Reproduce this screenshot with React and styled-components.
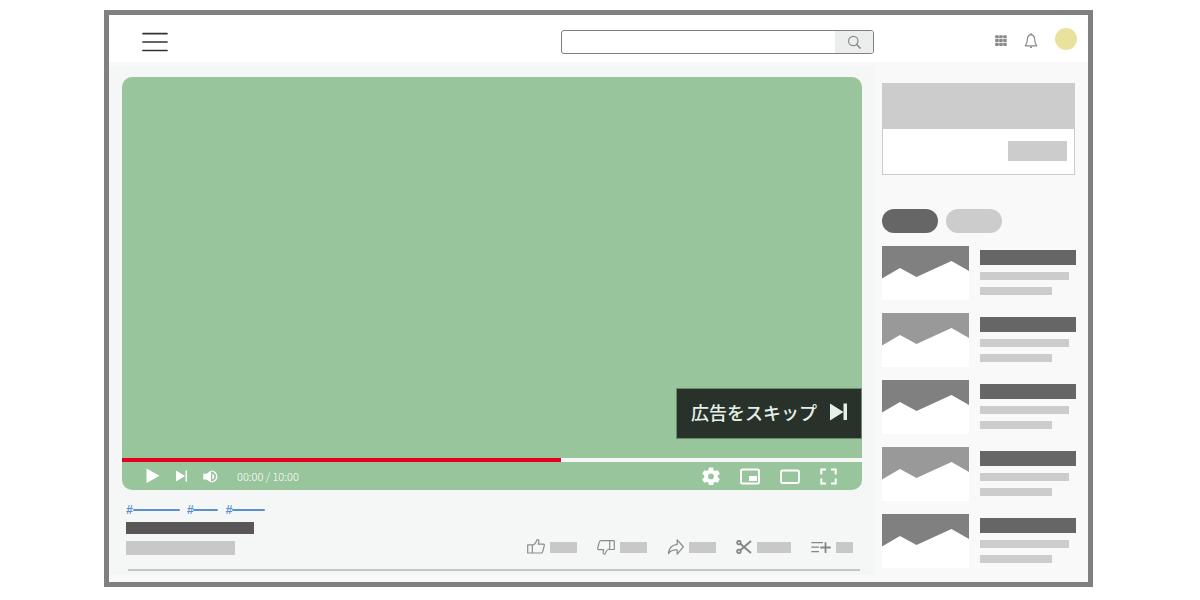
import React, { useState } from 'react';
import styled, { createGlobalStyle } from 'styled-components';

const videos = [
    { id: 1, shade: '#808080' },
    { id: 2, shade: '#999999' },
    { id: 3, shade: '#808080' },
    { id: 4, shade: '#999999' },
    { id: 5, shade: '#808080' },
]

const tags = [
    { id: 1, width: 47 },
    { id: 2, width: 25 },
    { id: 3, width: 33 },
]

const App = () => {
    const [position, setPosition] = useState(593)

    return (
        <Page>
            <GlobalStyle />
            <Frame>
                {/* header */}
                <Header>
                    <HeaderMain>
                        <IconButton aria-label="Menu"><MenuIcon /></IconButton>
                        <SearchForm role="search" onSubmit={e => e.preventDefault()}>
                            <SearchInput type="text" aria-label="Search" />
                            <SearchButton type="submit" aria-label="Search"><SearchIcon /></SearchButton>
                        </SearchForm>
                    </HeaderMain>
                    <HeaderSide>
                        <IconButton aria-label="Apps"><AppsIcon /></IconButton>
                        <IconButton aria-label="Notifications"><BellIcon /></IconButton>
                        <Avatar aria-label="Account" />
                    </HeaderSide>
                </Header>
                {/* end header */}
                <Content>
                    <Main>
                        {/* player */}
                        <Player>
                            <Video>
                                <SkipButton>
                                    広告をスキップ
                                    <SkipIcon />
                                </SkipButton>
                            </Video>
                            <Progress
                                type="range"
                                aria-label="Position"
                                min="0"
                                max="1000"
                                value={position}
                                onChange={e => setPosition(Number(e.target.value))}
                                style={{ '--played': `${position / 10}%` }}
                            />
                            <Controls>
                                <ControlGroup $gap={16}>
                                    <IconButton aria-label="Play"><PlayIcon /></IconButton>
                                    <IconButton aria-label="Next"><NextIcon /></IconButton>
                                    <IconButton aria-label="Volume"><VolumeIcon /></IconButton>
                                    <Time>00:00 / 10:00</Time>
                                </ControlGroup>
                                <ControlGroup $gap={20}>
                                    <IconButton aria-label="Settings"><GearIcon /></IconButton>
                                    <IconButton aria-label="Mini player"><MiniIcon /></IconButton>
                                    <IconButton aria-label="Theater mode"><TheaterIcon /></IconButton>
                                    <IconButton aria-label="Full screen"><FullIcon /></IconButton>
                                </ControlGroup>
                            </Controls>
                        </Player>
                        {/* end player */}
                        {/* video info */}
                        <Tags>
                            {tags.map(tag => (
                                <Tag key={tag.id} href="#">#<TagLine $width={tag.width} /></Tag>
                            ))}
                        </Tags>
                        <Info>
                            <Titles>
                                <Bar $width={128} $height={12} $color="#595757" />
                                <Bar $width={109} $height={14} $color="#c8c8c8" />
                            </Titles>
                            <Actions>
                                <Action aria-label="Like"><LikeIcon /><Bar $width={27} $height={11} $color="#c8c8c8" /></Action>
                                <Action aria-label="Dislike"><DislikeIcon /><Bar $width={27} $height={11} $color="#c8c8c8" /></Action>
                                <Action aria-label="Share"><ShareIcon /><Bar $width={27} $height={11} $color="#c8c8c8" /></Action>
                                <Action aria-label="Clip"><ClipIcon /><Bar $width={34} $height={11} $color="#c8c8c8" /></Action>
                                <Action aria-label="Save"><SaveIcon /><Bar $width={17} $height={11} $color="#c8c8c8" /></Action>
                            </Actions>
                        </Info>
                        <Divider />
                        {/* end video info */}
                    </Main>
                    {/* sidebar */}
                    <Sidebar>
                        <Ad>
                            <AdBanner />
                            <AdFooter><AdButton aria-label="Open ad" /></AdFooter>
                        </Ad>
                        <Filters>
                            <Pill aria-label="All" $color="#666666" />
                            <Pill aria-label="Related" $color="#cccccc" />
                        </Filters>
                        <List>
                            {videos.map(video => (
                                <li key={video.id}>
                                    <VideoLink href="#" aria-label={`Video ${video.id}`}>
                                        <Thumbnail shade={video.shade} />
                                        <VideoText>
                                            <Bar $width={96} $height={15} $color="#666666" />
                                            <Bar $width={89} $height={8} $color="#cccccc" />
                                            <Bar $width={72} $height={8} $color="#cccccc" />
                                        </VideoText>
                                    </VideoLink>
                                </li>
                            ))}
                        </List>
                    </Sidebar>
                    {/* end sidebar */}
                </Content>
            </Frame>
        </Page>
    );
}

/* icons */

const MenuIcon = () => (
    <svg width="26" height="20" viewBox="0 0 26 20" stroke="#333" strokeWidth="1.7" strokeLinecap="round">
        <path d="M1 1.6h24M1 10h24M1 18.5h24" />
    </svg>
)

const SearchIcon = () => (
    <svg width="14" height="14" viewBox="0 0 14 14" fill="none" stroke="#888" strokeWidth="1.2" strokeLinecap="round">
        <circle cx="6.3" cy="6" r="4.7" />
        <path d="M9.7 9.5l3.4 3.6" strokeWidth="1.5" />
    </svg>
)

const AppsIcon = () => (
    <svg width="12" height="12" viewBox="0 0 12 12" fill="#888">
        {[0.2, 4, 7.8].map(y => [0.2, 4.2, 8.2].map(x => (
            <rect key={`${x}-${y}`} x={x} y={y} width="3.5" height="3.1" rx="0.6" />
        )))}
    </svg>
)

const BellIcon = () => (
    <svg width="14" height="16" viewBox="0 0 14 16" fill="none" stroke="#8a8a8a" strokeWidth="1.2" strokeLinejoin="round">
        <path d="M7 1.7C4.5 2 3.5 3.8 3.4 6.2 3.3 9 2.8 10.5 1.3 12.8H12.7C11.2 10.5 10.7 9 10.6 6.2 10.5 3.8 9.500 2 7 1.7z" />
        <path d="M7 0.3v1.5M6 14.3h2" strokeWidth="1.6" />
    </svg>
)

const SkipIcon = () => (
    <svg width="17" height="18" viewBox="0 0 17 18" fill="#e6f0e8">
        <path d="M0 0.5L13.5 9 0 17.500zM13.500 0.5H17v16.500h-3.500z" />
    </svg>
)

const PlayIcon = () => (
    <svg width="14" height="16" viewBox="0 0 14 16" fill="#fff">
        <path d="M0.500 0.500L13.500 7.700 0.500 15z" />
    </svg>
)

const NextIcon = () => (
    <svg width="11" height="12" viewBox="0 0 11 12" fill="#fff">
        <path d="M0 0.500L9 6 0 11.500zM9.500 0.500H11v11H9.500z" />
    </svg>
)

const VolumeIcon = () => (
    <svg width="15" height="14" viewBox="0 0 15 14" fill="#fff">
        <path d="M0.300 4.700h3.200L8 1.500v12L3.500 10.500H0.300z" />
        <path d="M8.500 2.200a5.300 5.300 0 0 1 0 10.600" fill="none" stroke="#fff" strokeWidth="1.300" />
        <path d="M9.300 4.500a3.200 3.200 0 0 1 0 6z" />
    </svg>
)

const GearIcon = () => (
    <svg width="18" height="18" viewBox="2 1.500 20 20" fill="#fff">
        <path d="M19.430 12.980c.040-.320.070-.640.070-.980s-.030-.660-.070-.980l2.110-1.650c.190-.150.240-.420.120-.640l-2-3.460c-.120-.220-.390-.300-.610-.220l-2.490 1c-.520-.400-1.080-.730-1.690-.980l-.380-2.650C14.460 2.180 14.250 2 14 2h-4c-.250 0-.460.180-.490.420l-.380 2.650c-.610.250-1.170.590-1.690.980l-2.490-1c-.230-.090-.490 0-.610.220l-2 3.460c-.130.220-.070.490.120.640l2.110 1.650c-.040.320-.070.650-.070.980s.030.660.070.980l-2.110 1.650c-.190.150-.240.420-.120.640l2 3.460c.120.220.390.300.610.220l2.490-1c.520.400 1.080.730 1.690.980l.380 2.650c.030.240.240.420.490.420h4c.250 0 .460-.180.490-.420l.380-2.650c.610-.250 1.170-.590 1.690-.980l2.490 1c.230.090.490 0 .610-.220l2-3.460c.120-.220.070-.490-.120-.640l-2.110-1.650zM12 15.200a3.200 3.200 0 1 1 0-6.400 3.200 3.200 0 0 1 0 6.400z" />
    </svg>
)

const MiniIcon = () => (
    <svg width="20" height="18" viewBox="0 0 20 18">
        <rect x="1" y="2.500" width="18" height="14" rx="1.500" fill="none" stroke="#fff" strokeWidth="2" />
        <rect x="9" y="9" width="8" height="5" fill="#fff" />
    </svg>
)

const TheaterIcon = () => (
    <svg width="20" height="16" viewBox="0 0 20 16" fill="none" stroke="#fff" strokeWidth="1.800">
        <rect x="1" y="2.500" width="18" height="12.500" rx="1.500" />
    </svg>
)

const FullIcon = () => (
    <svg width="17" height="18" viewBox="0 0 17 18" fill="none" stroke="#fff" strokeWidth="2">
        <path d="M1.300 7.500V2.500H6M11 2.500h4.700V7.500M15.700 11.500v5H11M6 16.500H1.300V11.500" />
    </svg>
)

const LikeIcon = () => (
    <svg width="18" height="16" viewBox="0 0 18 16" fill="none" stroke="#8c8c8c" strokeWidth="1.200" strokeLinejoin="round">
        <path d="M0.700 5.800H5.300V14H0.700zM5.300 6.300C7.500 5.800 9 3.500 9.800 1.300 10 0.500 11.300 0.400 11.800 1.300 12.100 2.300 11.600 3.800 11.300 5.100H16.300C17.200 5.100 17.500 5.900 17.300 6.700L15.600 12.800C15.400 13.600 15 14 14.200 14H5.300" />
    </svg>
)

const DislikeIcon = () => (
    <svg width="18" height="16" viewBox="0 0 18 16" fill="none" stroke="#8c8c8c" strokeWidth="1.200" strokeLinejoin="round">
        <path d="M17.300 1.700H12.700V10.500H17.300zM12.700 10C10.500 10.500 9 12 8.300 14.500 8 15.400 6.700 15.500 6.200 14.500 5.900 13.500 6.400 12 6.700 10.600H1.700C0.800 10.600 0.500 9.800 0.700 9L2.400 2.900C2.600 2.100 3 1.700 3.800 1.700H12.700" />
    </svg>
)

const ShareIcon = () => (
    <svg width="17" height="16" viewBox="0 0 17 16" fill="none" stroke="#8c8c8c" strokeWidth="1.300" strokeLinejoin="round">
        <path d="M10.200 0.900L16.300 7.800 10.200 15.200V11C6 10.700 3.500 12 1.400 14.500 2 9.500 5 5.800 10.200 5.300z" />
    </svg>
)

const ClipIcon = () => (
    <svg width="16" height="14" viewBox="0 0 16 14" fill="none" stroke="#858585">
        <circle cx="2.900" cy="2.600" r="1.800" strokeWidth="1.800" />
        <circle cx="2.900" cy="11.400" r="1.800" strokeWidth="1.800" />
        <path d="M4.300 3.800L8 7l7 6M4.300 10.200L8 7l7-6" strokeWidth="2" />
    </svg>
)

const SaveIcon = () => (
    <svg width="20" height="12" viewBox="0 0 20 12" fill="none" stroke="#858585" strokeLinecap="round">
        <path d="M0.800 1.700H11.500M0.800 6.200H7.500M0.800 10.700H7.500" strokeWidth="1.200" />
        <path d="M10 6.500H19M14.500 1.800V11.300" strokeWidth="1.800" />
    </svg>
)

const Thumbnail = ({ shade }) => (
    <svg width="87" height="54" viewBox="0 0 87 54">
        <rect width="87" height="54" fill="#fff" />
        <path d="M0 0H87V25L69.500 15 34.500 31 18 22 0 32.500z" fill={shade} />
    </svg>
)

/* layout */

const GlobalStyle = createGlobalStyle`
    * {
        box-sizing: border-box;
    }

    body {
        margin: 0;
        background: #fff;
        font-family: "Noto Sans CJK JP", sans-serif;
    }

    button {
        padding: 0;
        border: none;
        font-family: inherit;
        cursor: pointer;
    }

    svg {
        display: block;
        flex-shrink: 0;
    }
`

const Page = styled.div`
    padding: 10px 107px 13px 104px;
`

const Frame = styled.div`
    border: 5px solid #808080;
    background: #f9f9f9;
`

const Header = styled.header`
    display: grid;
    grid-template-columns: 1fr 214px;
    height: 47px;
    padding-top: 6px;
    background: #fff;
`

const HeaderMain = styled.div`
    display: flex;
    align-items: center;
    justify-content: space-between;
    padding-left: 33px;
`

const HeaderSide = styled.div`
    display: flex;
    align-items: center;
    justify-content: flex-end;
    gap: 17px;
    padding: 0 11px 2px 0;
`

const IconButton = styled.button`
    display: flex;
    background: transparent;
`

const SearchForm = styled.form`
    display: flex;
    width: 313px;
    height: 24px;
    border: 1px solid #808080;
    border-radius: 3px;
    background: #fff;
    overflow: hidden;
`

const SearchInput = styled.input`
    flex: 1;
    min-width: 0;
    padding: 0 8px;
    border: none;
    outline: none;
    background: transparent;
`

const SearchButton = styled.button`
    display: flex;
    align-items: center;
    justify-content: center;
    width: 38px;
    background: #eceeed;
`

const Avatar = styled.button`
    width: 22px;
    height: 22px;
    margin-bottom: 4px;
    border-radius: 50%;
    background: #e9e29c;
`

const Content = styled.div`
    display: grid;
    grid-template-columns: 1fr 214px;
`

const Main = styled.main`
    display: flex;
    flex-direction: column;
    margin: 4px 0 7px;
    padding: 11px 12px 4px 13px;
    background: #f5f7f7;
`

const Player = styled.section`
    display: flex;
    flex-direction: column;
    border-radius: 10px;
    background: #99c59d;
    overflow: hidden;
`

const Video = styled.div`
    position: relative;
    height: 381px;
`

const SkipButton = styled.button`
    position: absolute;
    right: 0;
    bottom: 19px;
    display: flex;
    align-items: center;
    gap: 13px;
    height: 51px;
    padding: 0 14px 3px;
    border: 1px solid #6d8a70;
    background: #28312a;
    color: #e6f0e8;
    font-size: 18px;
    font-weight: 500;
    line-height: 24px;
`

const Progress = styled.input`
    appearance: none;
    display: block;
    width: 100%;
    height: 4px;
    margin: 0;
    background: linear-gradient(to right, #e60020 var(--played), #f5f7f7 var(--played));
    cursor: pointer;

    &::-webkit-slider-thumb {
        appearance: none;
        width: 0;
        height: 4px;
    }
`

const Controls = styled.div`
    display: flex;
    align-items: center;
    justify-content: space-between;
    height: 28px;
    padding: 0 25px 0 24px;
`

const ControlGroup = styled.div`
    display: flex;
    align-items: center;
    gap: ${props => props.$gap}px;
`

const Time = styled.span`
    padding-left: 3px;
    color: #fff;
    font-size: 11px;
    font-weight: 300;
    line-height: 16px;
`

const Tags = styled.div`
    display: flex;
    gap: 7px;
    padding: 14px 4px 0;
`

const Tag = styled.a`
    display: flex;
    align-items: center;
    color: #5b8fce;
    font-family: "Liberation Sans", sans-serif;
    font-size: 12px;
    font-style: italic;
    font-weight: bold;
    line-height: 12px;
    text-decoration: none;
`

const TagLine = styled.span`
    width: ${props => props.$width}px;
    height: 2px;
    border-radius: 1px;
    background: #5b8fce;
`

const Info = styled.div`
    display: flex;
    align-items: flex-end;
    justify-content: space-between;
    padding: 6px 9px 0 4px;
`

const Bar = styled.span`
    display: block;
    width: ${props => props.$width}px;
    height: ${props => props.$height}px;
    background: ${props => props.$color};
`

const Titles = styled.div`
    display: flex;
    flex-direction: column;
    gap: 7px;
`

const Actions = styled.div`
    display: flex;
    align-items: center;
    gap: 20px;
`

const Action = styled.button`
    display: flex;
    align-items: center;
    gap: 5px;
    background: transparent;
`

const Divider = styled.hr`
    width: calc(100% - 8px);
    height: 2px;
    margin: 14px 2px 0 6px;
    border: none;
    background: #c4c6c6;
`

const Sidebar = styled.aside`
    padding: 21px 12px 14px 8px;
`

const Ad = styled.div`
    margin-right: 1px;
    border: 1px solid #ccc;
    background: #fff;
`

const AdBanner = styled.div`
    height: 45px;
    background: #ccc;
`

const AdFooter = styled.div`
    display: flex;
    align-items: flex-start;
    justify-content: flex-end;
    height: 45px;
    padding: 12px 7px 0 0;
`

const AdButton = styled.button`
    width: 59px;
    height: 20px;
    background: #ccc;
`

const Filters = styled.div`
    display: flex;
    gap: 8px;
    margin: 34px 0 13px;
`

const Pill = styled.button`
    width: 56px;
    height: 24px;
    border-radius: 12px;
    background: ${props => props.$color};
`

const List = styled.ul`
    display: flex;
    flex-direction: column;
    gap: 13px;
    margin: 0;
    padding: 0;
    list-style: none;
`

const VideoLink = styled.a`
    display: flex;
    gap: 11px;
`

const VideoText = styled.span`
    display: flex;
    flex-direction: column;
    gap: 7px;
    padding-top: 4px;
`

export default App;
